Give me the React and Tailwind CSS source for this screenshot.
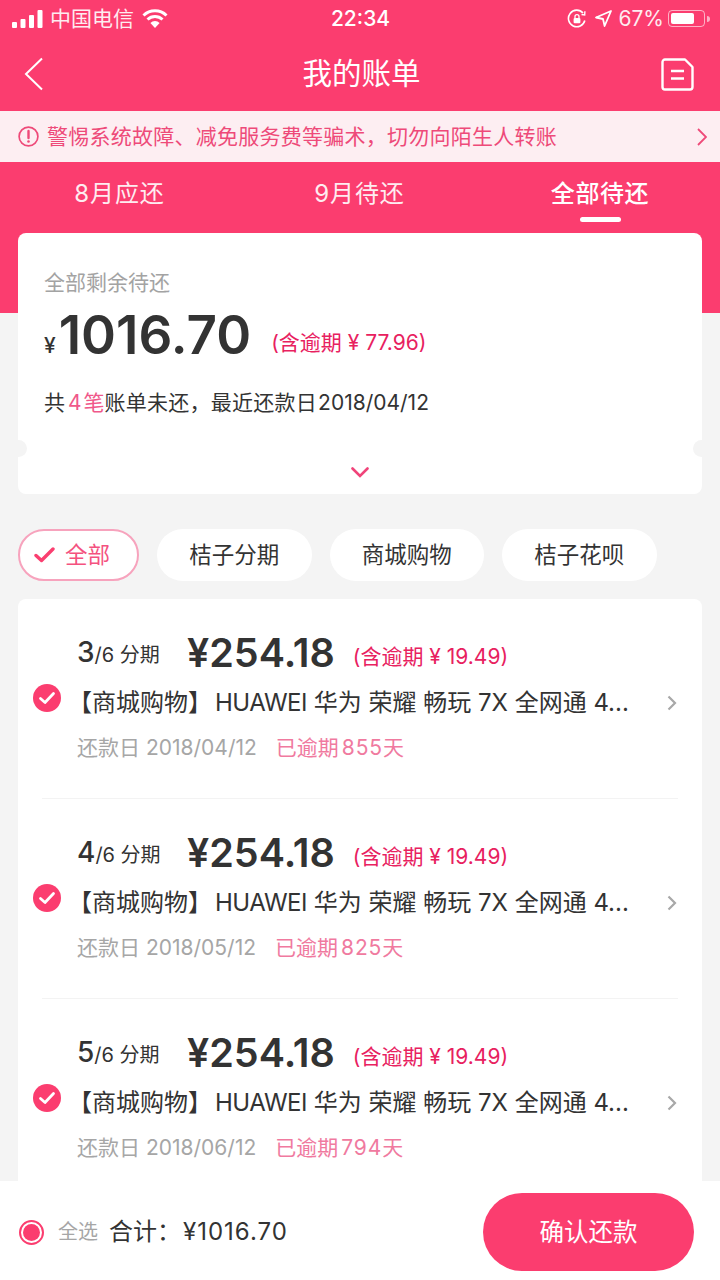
import React from "react";

const FONT = 'Inter,"Noto Sans CJK SC",sans-serif';

function StatusBar() {
  return (
    <div className="flex h-[37px] items-center justify-between pl-[12px] pr-[10px] text-white">
      <div className="flex w-[199px] items-center">
        <svg width="31" height="18" viewBox="0 0 31 18" fill="#fff">
          <rect x="0" y="12" width="5" height="6" rx="1" />
          <rect x="8.500" y="9" width="5" height="9" rx="1" />
          <rect x="17" y="5" width="5" height="13" rx="1" />
          <rect x="25.500" y="0" width="5" height="18" rx="1" />
        </svg>
        <span className="ml-[7px] text-[21px] leading-none opacity-90">中国电信</span>
        <svg className="ml-[8px]" width="26" height="20" viewBox="0 0 26 20" fill="none" stroke="#fff" strokeWidth="3">
          <path d="M1.500 6.500a16.500 16.500 0 0 1 23 0" />
          <path d="M5.500 10.500a11 11 0 0 1 15 0" />
          <path d="M13 19l-4.600-5a6.500 6.500 0 0 1 9.200 0z" fill="#fff" stroke="none" />
        </svg>
      </div>
      <span className="text-[21px] font-medium leading-none">22:34</span>
      <div className="flex w-[200px] items-center justify-end">
        <svg width="20" height="20" viewBox="0 0 20 20" fill="none" stroke="#fff" strokeWidth="1.600">
          <path d="M17.800 11.500A8.300 8.300 0 1 1 16 4" />
          <path d="M14.500 5.500l3.200.4.200-3.600" strokeWidth="1.400" />
          <rect x="6.600" y="9" width="6.800" height="5.200" rx="1" fill="#fff" stroke="none" />
          <path d="M8 9V7.600a2 2 0 0 1 4 0V9" strokeWidth="1.300" />
        </svg>
        <svg className="ml-[8px]" width="17" height="17" viewBox="0 0 17 17" fill="none" stroke="#fff" strokeWidth="1.800" strokeLinejoin="round">
          <path d="M16 1L1 7.500l7 1.500 1.600 7z" />
        </svg>
        <span className="ml-[6px] text-[21px] leading-none opacity-90">67%</span>
        <div className="ml-[4px] flex h-[17px] w-[37px] items-center rounded-[4px] border border-white/60 p-[2px]">
          <div className="h-full w-[23px] rounded-[2px] bg-white" />
        </div>
        <div className="ml-[2px] h-[6px] w-[3px] rounded-r-sm bg-white/60" />
      </div>
    </div>
  );
}

function NavBar() {
  return (
    <div className="flex h-[74px] items-center justify-between pl-[24px] pr-[26px]">
      <svg width="20" height="34" viewBox="0 0 20 34" fill="none" stroke="#fff" strokeWidth="2">
        <path d="M18 1.500L2 17l16 15.500" />
      </svg>
      <h1 className="ml-[18px] text-[29.5px] font-normal leading-none text-white">我的账单</h1>
      <svg width="33" height="33" viewBox="0 0 33 33" fill="none" stroke="#fff" strokeWidth="2.400" strokeLinejoin="round">
        <path d="M4 1.500h20l7.500 7.500v20a2.500 2.500 0 0 1-2.500 2.500H4a2.500 2.500 0 0 1-2.500-2.500V4A2.500 2.500 0 0 1 4 1.500z" />
        <path d="M10 13h13M10 20.500h13" />
      </svg>
    </div>
  );
}

function Notice() {
  return (
    <div className="flex h-[51px] items-center bg-[#fdeef2] pl-[18px] pr-[13px] text-[#ee4a79]">
      <svg width="21" height="21" viewBox="0 0 21 21" fill="none" stroke="#ee4a79" strokeWidth="1.700">
        <circle cx="10.500" cy="10.500" r="9.400" />
        <path d="M10.500 5v7" strokeWidth="2.400" strokeLinecap="round" />
        <circle cx="10.500" cy="15.500" r="1.300" fill="#ee4a79" stroke="none" />
      </svg>
      <span className="ml-[8px] flex-1 text-[21px] leading-none tracking-[0.25px]">警惕系统故障、减免服务费等骗术，切勿向陌生人转账</span>
      <svg width="10" height="18" viewBox="0 0 10 18" fill="none" stroke="#ee4a79" strokeWidth="1.800">
        <path d="M1 1l8 8-8 8" />
      </svg>
    </div>
  );
}

function Tabs() {
  const tabs = [
    { label: "8月应还", w: "w-[239px]" },
    { label: "9月待还", w: "w-[241px]" },
    { label: "全部待还", w: "w-[240px]", active: true },
  ];
  return (
    <div className="flex h-[71px] items-start text-white">
      {tabs.map((t) => (
        <div key={t.label} className={`${t.w} flex flex-col items-center pt-[16px]`}>
          <span className={`text-[24px] leading-[32px] ${t.active ? "font-medium tracking-[0.6px]" : "tracking-[0.9px] opacity-90"}`}>{t.label}</span>
          {t.active && <div className="mt-[7px] h-[5px] w-[41px] rounded-full bg-white" />}
        </div>
      ))}
    </div>
  );
}

function SummaryCard() {
  return (
    <div className="relative mx-[18px] h-[261px] rounded-[8px] bg-white px-[26px] pt-[36px]">
      <div className="text-[21px] leading-[28px] text-[#a3a3a3]">全部剩余待还</div>
      <div className="mt-[12px] flex h-[52px] items-end">
        <span className="mb-[5px] text-[21px] font-medium leading-none text-[#333]">¥</span>
        <span className="ml-[3px] text-[53px] font-semibold leading-[52px] text-[#333]">1016.70</span>
        <span className="mb-[6px] ml-[20px] text-[21px] leading-[24px] text-[#e8215f]">(含逾期 ¥ 77.96)</span>
      </div>
      <div className="mt-[28px] text-[21px] leading-[28px] text-[#333]">
        共<span className="ml-[3px] text-[#f0588a]">4<span className="ml-[2px]">笔</span></span>
        <span className="tracking-[0.25px]">账单未还，最近还款日</span>
        <span className="ml-[1px]">2018/04/12</span>
      </div>
      {/* ticket notches on the card edges */}
      <div className="absolute left-[-8px] top-[207px] h-[17px] w-[17px] rounded-full bg-[#f4f4f4]" />
      <div className="absolute right-[-8px] top-[207px] h-[17px] w-[17px] rounded-full bg-[#f4f4f4]" />
      <div className="absolute bottom-[16px] left-0 flex w-full justify-center">
        <svg width="18" height="11" viewBox="0 0 18 11" fill="none" stroke="#f0447a" strokeWidth="2.600" strokeLinecap="round">
          <path d="M1.500 1.500L9 9l7.500-7.500" />
        </svg>
      </div>
    </div>
  );
}

function Filters() {
  return (
    <div className="mx-[18px] mt-[35px] flex gap-[18px]">
      <div className="flex h-[52px] w-[121px] items-center rounded-full border-2 border-[#f7a3bd] bg-white pl-[14px] text-[22.500px] text-[#f4527f]">
        <svg width="21" height="16" viewBox="0 0 21 16" fill="none" stroke="#fa3f70" strokeWidth="3.400" strokeLinecap="round" strokeLinejoin="round">
          <path d="M2 8.500l5.500 5L19 2" />
        </svg>
        <span className="ml-[10px] leading-none">全部</span>
      </div>
      {["桔子分期", "商城购物", "桔子花呗"].map((t) => (
        <div key={t} className="flex h-[52px] w-[154.500px] items-center justify-center rounded-full bg-white text-[22.500px] leading-none text-[#333]">
          {t}
        </div>
      ))}
    </div>
  );
}

function BillRow({ period, date, days, last }) {
  return (
    <div className={`mx-[24px] h-[200px] pt-[30px] ${last ? "" : "border-b border-[#f3f3f3]"}`}>
      <div className="flex h-[48px] items-center pl-[35px]">
        <span className="w-[110px] whitespace-nowrap text-[#333]">
          <span className="text-[28px] font-medium leading-none">{period}</span>
          <span className="text-[20px] leading-none">/6 分期</span>
        </span>
        <span className="mt-[2px] text-[39.500px] font-semibold leading-none text-[#333]">¥254.18</span>
        <span className="ml-[18px] mt-[6px] text-[21px] leading-none text-[#e8215f]">(含逾期 ¥ 19.49)</span>
      </div>
      <div className="mt-[8px] flex h-[36px] items-center text-[24px] leading-none text-[#333]">
        <span className="flex w-[28px] shrink-0">
          <svg className="-ml-[9px] -mt-[10px]" width="28" height="28" viewBox="0 0 28 28">
            <circle cx="14" cy="14" r="14" fill="#fb3d6f" />
            <path d="M7.500 14.500l4.500 4 8.500-9" fill="none" stroke="#fff" strokeWidth="2.800" strokeLinecap="round" strokeLinejoin="round" />
          </svg>
        </span>
        <span className="-ml-[2px] whitespace-nowrap">
          【商城购物】<span className="ml-[3px] tracking-[-0.5px]">HUAWEI</span> 华为 荣耀 畅玩 7X 全网通 4...
        </span>
        <svg className="ml-auto mr-[1px]" width="10" height="16" viewBox="0 0 10 16" fill="none" stroke="#a8a8a8" strokeWidth="2.200">
          <path d="M1.500 1.500L8 8l-6.500 6.500" />
        </svg>
      </div>
      <div className="mt-[11px] flex h-[30px] items-center pl-[35px] text-[21px] leading-none">
        <span className="text-[#a6a6a6]">还款日 {date}</span>
        <span className="ml-[19px] text-[#f07a9f]">
          已逾期<span className="ml-[3px] tracking-[0.9px]">{days}</span>天
        </span>
      </div>
    </div>
  );
}

function Footer() {
  return (
    <div className="flex h-[99px] shrink-0 items-center bg-white pl-[19px] pr-[26px] pt-[3px]">
      <div className="flex h-[25px] w-[25px] items-center justify-center rounded-full border-2 border-[#fb3d6f]">
        <div className="h-[17px] w-[17px] rounded-full bg-[#fb3d6f]" />
      </div>
      <span className="ml-[14px] text-[20px] leading-none text-[#a6a6a6]">全选</span>
      <span className="ml-[11px] text-[24px] leading-none text-[#333]">
        合计：<span className="ml-[2px] tracking-[1px]">¥1016.70</span>
      </span>
      <button className="ml-auto h-[78px] w-[211px] rounded-full bg-[#fb3d6f] text-[24.500px] text-white">确认还款</button>
    </div>
  );
}

export default function App() {
  return (
    <div className="flex h-[1280px] w-[720px] flex-col overflow-hidden bg-[#f4f4f4]" style={{ fontFamily: FONT }}>
      <div className="min-h-0 flex-1 overflow-hidden">
        <div className="bg-[#fb3d6f]">
          <StatusBar />
          <NavBar />
          <Notice />
          <Tabs />
          <div className="h-[80px]" />
        </div>
        <div className="-mt-[80px]">
          <SummaryCard />
        </div>
        <Filters />
        <div className="mx-[18px] mt-[18px] rounded-t-[8px] bg-white">
          <BillRow period="3" date="2018/04/12" days="855" />
          <BillRow period="4" date="2018/05/12" days="825" />
          <BillRow period="5" date="2018/06/12" days="794" last />
        </div>
      </div>
      <Footer />
    </div>
  );
}
